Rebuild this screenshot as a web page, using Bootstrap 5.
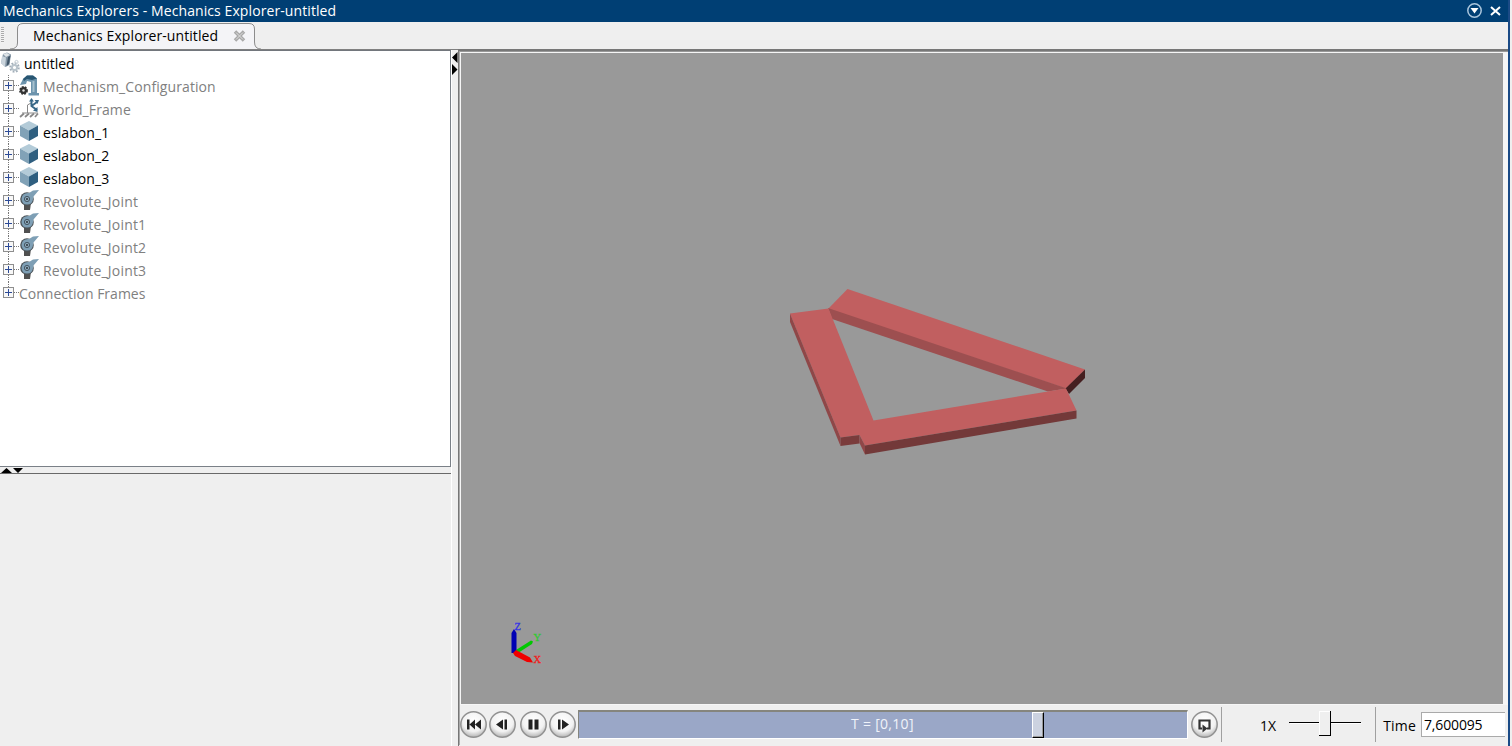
<!DOCTYPE html>
<html lang="en">
<head>
<meta charset="utf-8">
<title>Mechanics Explorers</title>
<link href="https://cdn.jsdelivr.net/npm/bootstrap@5.3.0/dist/css/bootstrap.min.css" rel="stylesheet">
<style>
body{font-family:"Open Sans","Noto Sans",sans-serif;font-size:14px;line-height:22px;color:#000;background:#efefef;width:1512px;height:746px}
.app-window{width:1510px;height:746px;border-right:2px solid #1a4a86}
.title-strip{height:22px;background:#003f74;color:#fff;padding-left:3px;padding-right:7px}
.t{white-space:pre;display:inline-block}
.tab-strip{height:28px;border-bottom:1px solid #808080}
.grip{width:3px;height:16px;margin:5px 0 0 1px;background:repeating-linear-gradient(#aaa 0 1px,#f4f4f4 1px 2px)}
.doc-tab{margin-left:13px;width:239px;height:27px;position:relative}
.doc-tab>svg.shape{position:absolute;left:-7px;top:0}
.doc-tab .t,.doc-tab .x{position:relative}
.left-col{width:451px}
.tree-pane{height:417px;background:#fff;border-top:1px solid #72767c;border-right:1px solid #7a8087;border-bottom:1px solid #7a8087;padding-top:1px}
.tree-row{height:23px;color:#808080}
.tree-row.on{color:#000}
.tree-row svg{flex:none}
.s1{letter-spacing:.09px}
.s2{letter-spacing:.2px}
.split-h{height:7px;border-bottom:1px solid #696969;padding-left:1px}
.split-v{width:7px;border-left:1px solid #fff;padding-top:2px}
.view-col{border-left:1px solid #777;border-top:2px solid #777;margin-top:-1px}
.view-inner{border-left:1px solid #aaa;border-top:1px solid #999}
.canvas-frame{height:653px;border:1px solid #f6f6f6;border-width:1px 5px 1px 1px;background:#999}
.play-bar{height:40px}
.time-track{width:610px;height:29px;margin-top:5px;margin-left:2px;background:#9aa7c7;border:1px solid #fff;border-top:2px solid #85857d;border-left:1px solid #85857d;color:#f0f3fa;position:relative}
.time-track .t{position:absolute;left:272px;top:1px}
.track-thumb{position:absolute;left:74.55%;top:0;width:12px;height:26px;background:#ccd2e0;border:1px solid #fff;border-right-color:#000;border-bottom-color:#000;box-shadow:inset -1px -1px #999}
.vline{width:1px;height:35px;background:#a0a0a0;margin-top:2px}
.time-field{width:84px;height:25px;border:1px solid #aaa;border-right:0;background:#fff;padding-left:2px;padding-top:1px}
</style>
</head>
<body class="overflow-hidden">
<svg width="0" height="0" class="position-absolute">
<defs>
<radialGradient id="rb" cx=".5" cy=".35" r=".65"><stop offset="0" stop-color="#fff"/><stop offset=".65" stop-color="#f2f2f2"/><stop offset="1" stop-color="#b4b4b4"/></radialGradient>
<symbol id="plus" viewBox="0 0 19 23"><path d="M8.5 0V23M14 10.5H19" stroke="#777" stroke-dasharray="1 1"/><rect x="3.5" y="5.5" width="10" height="10" fill="#f8f8f8" stroke="#8e8e8e"/><path d="M5 10.5h7M8.5 7v7" stroke="#2c4a96"/></symbol>
<symbol id="pluslast" viewBox="0 0 19 23"><path d="M8.5 0V11M14 10.5H19" stroke="#777" stroke-dasharray="1 1"/><rect x="3.5" y="5.5" width="10" height="10" fill="#f8f8f8" stroke="#8e8e8e"/><path d="M5 10.5h7M8.5 7v7" stroke="#2c4a96"/></symbol>
<symbol id="cube" viewBox="0 0 20 20"><path d="M10 0L19 4.500L10 9.500L1 4.500Z" fill="#b3cbd8"/><path d="M1 4.500L10 9.500V20L1 15Z" fill="#81a2b7"/><path d="M19 4.500L10 9.500V20L19 15Z" fill="#2f5f80"/></symbol>
<symbol id="joint" viewBox="0 0 20 20"><path d="M5 13H12L11 20H5Z" fill="#505050"/><circle cx="8" cy="9" r="6.800" fill="#4b5257"/><path d="M20 0L14 .5L10 3Q3 2.500 2.500 9Q3 14.500 8 14.500Q13.500 14.500 14 9L14.500 6.500Z" fill="#7e9fb5"/><circle cx="8" cy="9" r="2.600" fill="#8fabbd" stroke="#3c4c58" stroke-width=".9"/><circle cx="8" cy="9" r="1" fill="#2a3238"/></symbol>
</defs>
</svg>
<div class="app-window d-flex flex-column">
  <header class="title-strip d-flex align-items-center justify-content-between">
    <span class="t s1">Mechanics Explorers - Mechanics Explorer-untitled</span>
    <svg width="42" height="22" viewBox="1459 0 42 22" fill="none"><circle cx="1474.500" cy="10.500" r="6.700" stroke="#a9c5dc" stroke-width="1.500"/><path d="M1470.500 8H1478.500L1474.500 13.500Z" fill="#fff"/><path d="M1491 7L1500 15M1500 7L1491 15" stroke="#fff" stroke-width="2"/></svg>
  </header>
  <div class="tab-strip d-flex">
    <div class="grip"></div>
    <div class="doc-tab d-flex align-items-center">
      <svg class="shape" width="254" height="28" viewBox="0 0 254 28"><path d="M0 27Q7.500 27 7.500 21V7Q7.500 1.500 13 1.500H239Q244.500 1.500 244.500 7V20Q244.500 27 251 27V28H0Z" fill="#f4f4f7"/><path d="M0 27Q7.500 27 7.500 21V7Q7.500 1.500 13 1.500H239Q244.500 1.500 244.500 7V20Q244.500 27 251 27" fill="none" stroke="#8c8c8c"/><path d="M0 27.500H254" stroke="#808080"/></svg>
      <span class="t s1" style="margin-left:16px">Mechanics Explorer-untitled</span>
      <svg class="x" style="margin-left:15px" width="13" height="12" viewBox="0 0 13 12"><path d="M2 1.500L11 10.500M11 1.500L2 10.500" stroke="#a8a8a8" stroke-width="3.500"/><path d="M3 2.500L10 9.500M10 2.500L3 9.500" stroke="#e0e0e0" stroke-width="1"/></svg>
    </div>
  </div>
  <main class="d-flex flex-grow-1">
    <aside class="left-col">
      <div class="tree-pane">
        <div class="tree-row on d-flex align-items-center"><svg width="24" height="23" viewBox="0 0 24 23"><path d="M3 2L7 .5L11 2.500L9.500 13L5.500 15L1 11Z" fill="#8799a8"/><path d="M2 4L6 5.500L5 15L1 11Z" fill="#cad4dc"/><path d="M3 2L7 1L10 3L6 5Z" fill="#e0e5e9"/><path d="M8 5L10.500 3.500L9 12L6.500 14Z" fill="#3f5467"/><g fill="none"><circle cx="14.500" cy="15.500" r="4" stroke="#a3afb9" stroke-width="2.500" stroke-dasharray="1.700 1.400"/><circle cx="14.500" cy="15.500" r="2.600" stroke="#b9c4cc" stroke-width="2"/><circle cx="16.500" cy="10" r="1.600" stroke="#c5ced5"/></g></svg><span class="t">untitled</span></div>
        <div class="tree-row d-flex align-items-center"><svg width="19" height="23"><use href="#plus"/></svg><svg width="24" height="23" viewBox="0 0 24 23"><path d="M1 10L4 4L8 .5H14L18 3.500V18H20V20.500H9.500V18H12L12 7L8 6L7 9Z" fill="#6d94ad"/><path d="M4 4L8 .5H14L18 3.500L13 5L8 4L5 6Z" fill="#285672"/><path d="M14.500 6V17" stroke="#a7c1ce" stroke-width="2"/><circle cx="4.500" cy="15.500" r="3.400" fill="#333" stroke="#333" stroke-width="2" stroke-dasharray="1.800 1"/><circle cx="4.500" cy="15.500" r="1.200" fill="#ddd"/></svg><span class="t s1">Mechanism_Configuration</span></div>
        <div class="tree-row d-flex align-items-center"><svg width="19" height="23"><use href="#plus"/></svg><svg width="24" height="23" viewBox="0 0 24 23"><path d="M3 15H19" stroke="#888"/><path d="M8.500 15V7L12 5" fill="none" stroke="#888"/><path d="M1 19L5 15.500M6 19L10 15.500M11 19L15 15.500M16 19L19 15.500" stroke="#888" stroke-width="1.800"/><path d="M12.500 2V8L18 12M12.500 8L18 4" fill="none" stroke="#386887" stroke-width="2"/><path d="M10 3.500L12.500 0L15 3.500ZM15.500 2L20 2L18.500 6ZM18.500 9V14L14 12.500Z" fill="#386887"/></svg><span class="t s1">World_Frame</span></div>
        <div class="tree-row on d-flex align-items-center"><svg width="19" height="23"><use href="#plus"/></svg><svg class="me-1 mb-1" width="20" height="20"><use href="#cube"/></svg><span class="t s1">eslabon_1</span></div>
        <div class="tree-row on d-flex align-items-center"><svg width="19" height="23"><use href="#plus"/></svg><svg class="me-1 mb-1" width="20" height="20"><use href="#cube"/></svg><span class="t s1">eslabon_2</span></div>
        <div class="tree-row on d-flex align-items-center"><svg width="19" height="23"><use href="#plus"/></svg><svg class="me-1 mb-1" width="20" height="20"><use href="#cube"/></svg><span class="t s1">eslabon_3</span></div>
        <div class="tree-row d-flex align-items-center"><svg width="19" height="23"><use href="#plus"/></svg><svg class="me-1 mb-1" width="20" height="20"><use href="#joint"/></svg><span class="t s2">Revolute_Joint</span></div>
        <div class="tree-row d-flex align-items-center"><svg width="19" height="23"><use href="#plus"/></svg><svg class="me-1 mb-1" width="20" height="20"><use href="#joint"/></svg><span class="t s2">Revolute_Joint1</span></div>
        <div class="tree-row d-flex align-items-center"><svg width="19" height="23"><use href="#plus"/></svg><svg class="me-1 mb-1" width="20" height="20"><use href="#joint"/></svg><span class="t s2">Revolute_Joint2</span></div>
        <div class="tree-row d-flex align-items-center"><svg width="19" height="23"><use href="#plus"/></svg><svg class="me-1 mb-1" width="20" height="20"><use href="#joint"/></svg><span class="t s2">Revolute_Joint3</span></div>
        <div class="tree-row d-flex align-items-center"><svg width="19" height="23"><use href="#pluslast"/></svg><span class="t">Connection Frames</span></div>
      </div>
      <div class="split-h d-flex"><svg width="24" height="6" viewBox="0 0 24 6"><path d="M0 6L5.500 1L11 6ZM12 1H22L17 6Z"/></svg></div>
    </aside>
    <div class="split-v"><svg class="d-block" width="6" height="24" viewBox="0 0 6 24"><path d="M5.500 0V11L0 5.500ZM0 12V23L5.500 17.500Z"/></svg></div>
    <section class="view-col flex-grow-1">
      <div class="view-inner">
        <div class="canvas-frame">
          <svg class="d-block" width="1040" height="648" viewBox="461 53 1040 648">
            <path d="M828 309L847.500 289L1085 369.500L1066 388.500Z" fill="#c15f60"/>
            <path d="M828 308L1067 388.500L1048 391.500L832 319Z" fill="#9d4f50"/>
            <path d="M1085 369.500V378L1069 394L1065.500 388.500Z" fill="#451f20"/>
            <path d="M790 313.500L828.500 308.500L873.500 420.500L1066 388.500L1076.500 410.500L865 445.500L859.500 435L840.500 437.500Z" fill="#c15f60"/>
            <path d="M790 313.500L840.500 437.500V446L790 322Z" fill="#8f4748"/>
            <path d="M840.500 437.500L859.500 435V443.500L840.500 446Z" fill="#7a3c3c"/>
            <path d="M859.500 435L865 445.500V454.500L859.500 443Z" fill="#8f4748"/>
            <path d="M865 445.500L1076.500 410.500V418.500L865 454.500Z" fill="#733939"/>
            <path d="M516 650L531 640.500L533 641.500L532 644L518 653Z" fill="#00c800"/>
            <path d="M511.500 653V633L514 629L516.500 633V653Z" fill="#0000b4"/>
            <path d="M513 653L516 650L530 657.500L533 662.500L527 662L515 656Z" fill="#f00000"/>
            <g font-family="Liberation Serif,serif" font-size="10.500" stroke-width=".3"><text x="514.500" y="629.500" fill="#3232e6" stroke="#3232e6">Z</text><text x="533.500" y="640.500" fill="#32c832" stroke="#32c832">Y</text><text x="533.500" y="663" fill="#f02020" stroke="#f02020">X</text></g>
          </svg>
        </div>
        <div class="play-bar d-flex">
          <svg width="116" height="36" viewBox="460 705 116 36">
            <g fill="url(#rb)" stroke="#929292" stroke-width="1.500"><circle cx="473.500" cy="724.500" r="12.700"/><circle cx="502.500" cy="724.500" r="12.700"/><circle cx="533.500" cy="724.500" r="12.700"/><circle cx="562.500" cy="724.500" r="12.700"/></g>
            <g fill="#222"><path d="M467 719.500h2.500v10H467zM475 719.500v10L469.500 724.500zM481 719.500v10L475 724.500zM503 719.500v10L496 724.500zM504.500 719.500h2.500v10h-2.500zM528.500 719.500h4v10h-4zM534.500 719.500h4v10h-4zM558 719.500h2.500v10H558zM562 719.500v10L569 724.500z"/></g>
          </svg>
          <div class="time-track"><span class="t" style="letter-spacing:.3px">T = [0,10]</span><div class="track-thumb"></div></div>
          <svg style="margin-left:1px" width="32" height="36" viewBox="1189 705 32 36"><circle cx="1204.500" cy="724.500" r="12.700" fill="url(#rb)" stroke="#929292" stroke-width="1.500"/><path d="M1202 728.500H1199.500V720.500H1209.500V728.500H1207" fill="none" stroke="#333" stroke-width="2.200"/><path d="M1202.500 724.500L1207.500 728.500L1202.500 732.500Z" fill="#333"/></svg>
          <div class="vline"></div>
          <span class="t" style="margin-left:38px;margin-top:10px">1X</span>
          <svg style="margin-left:13px" width="73" height="36" viewBox="1289 705 73 36"><path d="M1289 722.500H1361" stroke="#000"/><path d="M1290 723.500H1361.500" stroke="#fff"/><rect x="1319" y="711" width="12" height="25" fill="#000"/><rect x="1319" y="711" width="11" height="24" fill="#fff"/><rect x="1320" y="712" width="10" height="23" fill="#efefef"/></svg>
          <div class="vline ms-auto"></div>
          <span class="t s2" style="margin:10px 5px 0 7px">Time</span>
          <div class="time-field" style="margin-top:7px;margin-right:3px"><span class="t" style="letter-spacing:-.15px">7,600095</span></div>
        </div>
      </div>
    </section>
  </main>
</div>
</body>
</html>
